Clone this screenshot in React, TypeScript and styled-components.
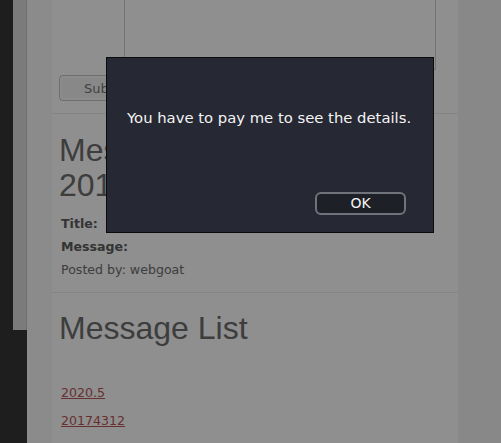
import React from "react";
import styled, { createGlobalStyle } from "styled-components";

const Global = createGlobalStyle`
  html, body { margin: 0; padding: 0; background: #1e1e1e; }
  body { font-family: "DejaVu Sans", sans-serif; }
`;

const Page = styled.div`
  position: relative;
  display: flex;
  width: 501px;
  height: 443px;
  overflow: hidden;
  background: #ffffff;
`;

const DarkStrip = styled.div`
  width: 13px;
  background: #363636;
`;

const SideStrip = styled.div`
  width: 14px;
  display: flex;
  flex-direction: column;
`;

const SideTop = styled.div`
  height: 330px;
  background: #dcdcdc;
  border-right: 1px solid #c4c4c4;
  box-sizing: border-box;
`;

const SideBottom = styled.div`
  flex: 1;
  background: #363636;
`;

const Gutter = styled.div`
  width: 25px;
  background: #f8f8f8;
`;

const Main = styled.div`
  width: 406px;
  background: #ffffff;
  padding-left: 7px;
  box-sizing: border-box;
  display: flex;
  flex-direction: column;
`;

const RightCol = styled.div`
  flex: 1;
  background: #f2f2f2;
`;

const TopRow = styled.div`
  height: 70px;
  display: flex;
  padding-left: 65px;
`;

const TextArea = styled.div`
  width: 312px;
  border: 1px solid #cfcfcf;
  border-top: none;
  box-sizing: border-box;
  background: #fff;
`;

const SubmitButton = styled.button`
  margin-top: 5px;
  align-self: flex-start;
  height: 26px;
  padding: 0 24px;
  border: 1px solid #c2c2c2;
  border-radius: 4px;
  background: #f2f2f2;
  color: #777;
  font-family: "DejaVu Sans", sans-serif;
  font-size: 13px;
  box-shadow: inset 0 0 0 2px #fafafa;
`;

const Rule = styled.div<{ $top: number }>`
  margin-top: ${(p) => p.$top}px;
  height: 1px;
  background: #ececec;
  margin-left: -7px;
`;

const Heading = styled.h2<{ $top: number }>`
  margin: ${(p) => p.$top}px 0 0 0;
  font-family: "Liberation Sans", Arial, sans-serif;
  font-weight: normal;
  font-size: 32px;
  line-height: 35px;
  color: #6e6e6e;
`;

const Details = styled.div`
  margin-top: 9px;
  padding-left: 2px;
  font-size: 12.6px;
  line-height: 23px;
  color: #6e6e6e;
`;

const Label = styled.div`
  font-weight: bold;
  color: #5e5e5e;
`;

const Links = styled.div`
  margin-top: 33px;
  padding-left: 2px;
  display: flex;
  flex-direction: column;
`;

const MsgLink = styled.a`
  font-size: 12.6px;
  line-height: 28px;
  color: #b85656;
  text-decoration: underline;
  align-self: flex-start;
`;

const Overlay = styled.div`
  position: absolute;
  inset: 0;
  background: rgba(0, 0, 0, 0.44);
`;

const Dialog = styled.div`
  position: absolute;
  left: 106px;
  top: 57px;
  width: 328px;
  height: 176px;
  box-sizing: border-box;
  background: #262833;
  border: 1px solid #0b0b0e;
  display: flex;
  flex-direction: column;
  justify-content: space-between;
  padding: 50px 27px 17px 20px;
`;

const DialogText = styled.div`
  font-family: "DejaVu Sans", sans-serif;
  font-size: 14.8px;
  line-height: 20px;
  color: #f4f4f4;
  white-space: nowrap;
`;

const OkButton = styled.button`
  align-self: flex-end;
  width: 91px;
  height: 23px;
  box-sizing: border-box;
  border: 2px solid #70737b;
  border-radius: 6px;
  background: #1e2028;
  color: #f4f4f4;
  font-family: "DejaVu Sans", sans-serif;
  font-size: 14px;
  line-height: 17px;
  padding: 0;
`;

export default function App() {
  return (
    <>
      <Global />
      <Page>
        <DarkStrip />
        <SideStrip>
          <SideTop />
          <SideBottom />
        </SideStrip>
        <Gutter />
        <Main>
          <TopRow>
            <TextArea />
          </TopRow>
          <SubmitButton>Submit</SubmitButton>
          <Rule $top={12} />
          <Heading $top={19}>Message Contents For: 20174312</Heading>
          <Details>
            <Label>Title:</Label>
            <Label>Message:</Label>
            <div>Posted by: webgoat</div>
          </Details>
          <Rule $top={11} />
          <Heading $top={18}>Message List</Heading>
          <Links>
            <MsgLink href="#">2020.5</MsgLink>
            <MsgLink href="#">20174312</MsgLink>
          </Links>
        </Main>
        <RightCol />
        <Overlay />
        <Dialog>
          <DialogText>You have to pay me to see the details.</DialogText>
          <OkButton>OK</OkButton>
        </Dialog>
      </Page>
    </>
  );
}
